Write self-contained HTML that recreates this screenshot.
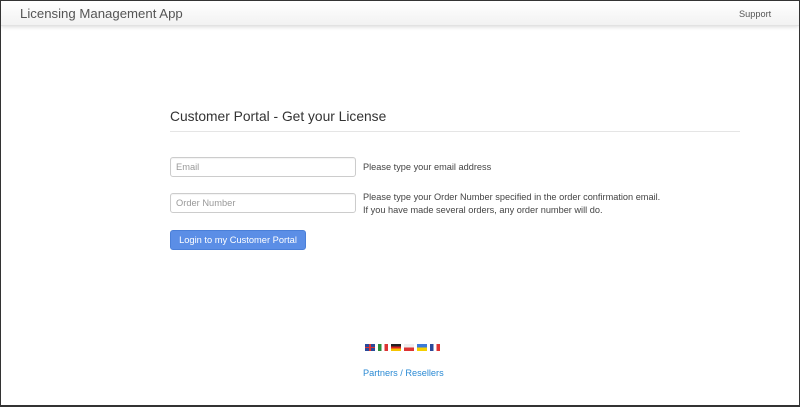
<!DOCTYPE html>
<html><head><meta charset="utf-8"><style>
*{box-sizing:border-box;margin:0;padding:0}
html,body{width:800px;height:407px;overflow:hidden;background:#fff;font-family:"Liberation Sans",Arial,sans-serif}
.frame{position:absolute;left:0;top:0;width:800px;height:407px;border:1px solid #333;border-bottom-width:2px;}
.nav{position:absolute;left:1px;top:1px;width:798px;height:25px;background:linear-gradient(#fff,#f2f2f2);box-shadow:0 1px 4px rgba(0,0,0,.15);border-bottom:1px solid #e2e2e2}
.brand{position:absolute;left:19px;top:5px;font-size:13.2px;color:#555}
.sup{position:absolute;left:738px;top:8px;font-size:9.2px;color:#555}
h2{position:absolute;left:170px;top:109px;font-size:13.8px;font-weight:normal;color:#333}
.hr{position:absolute;left:170px;top:131px;width:570px;height:1px;background:#e5e5e5}
.in{position:absolute;left:170px;width:186px;height:20px;border:1px solid #ccc;border-radius:3px;font-size:9.3px;color:#999;padding:4px 5px;box-shadow:inset 0 1px 1px rgba(0,0,0,.05)}
.t{position:absolute;left:363px;font-size:9.2px;color:#444;line-height:13px}
.btn{position:absolute;left:170px;top:230px;width:136px;height:20px;background:#5b8ee6;border:1px solid #4a7fd8;border-radius:3px;color:#fff;font-size:9.3px;text-align:center;line-height:18px}
.flags{position:absolute;left:365px;top:344px;display:flex;gap:3px}
.f{width:10px;height:7px}
.link{position:absolute;left:363px;top:368px;font-size:9.2px;color:#2a8ad4}
</style></head><body>
<div class="nav"><div class="brand">Licensing Management App</div><div class="sup">Support</div></div>
<h2>Customer Portal - Get your License</h2>
<div class="hr"></div>
<div class="in" style="top:157px">Email</div>
<div class="t" style="top:161px">Please type your email address</div>
<div class="in" style="top:193px">Order Number</div>
<div class="t" style="top:191px">Please type your Order Number specified in the order confirmation email.<br>If you have made several orders, any order number will do.</div>
<div class="btn">Login to my Customer Portal</div>
<div class="flags">
<div class="f" style="background:#2a4a9a;position:relative"><div style="position:absolute;left:4px;top:0;width:2px;height:7px;background:#d33"></div><div style="position:absolute;left:0;top:3px;width:10px;height:1px;background:#d33"></div></div>
<div class="f" style="background:linear-gradient(90deg,#2a8a3a 33%,#fff 33% 66%,#d33 66%)"></div>
<div class="f" style="background:linear-gradient(#222 33%,#d22 33% 66%,#f5c400 66%)"></div>
<div class="f" style="background:linear-gradient(#eee 50%,#d33 50%)"></div>
<div class="f" style="background:linear-gradient(#3a7ad8 50%,#f5d000 50%)"></div>
<div class="f" style="background:linear-gradient(90deg,#2a4a9a 33%,#fff 33% 66%,#d33 66%)"></div>
</div>
<div class="link">Partners / Resellers</div>
<div class="frame"></div>
</body></html>
